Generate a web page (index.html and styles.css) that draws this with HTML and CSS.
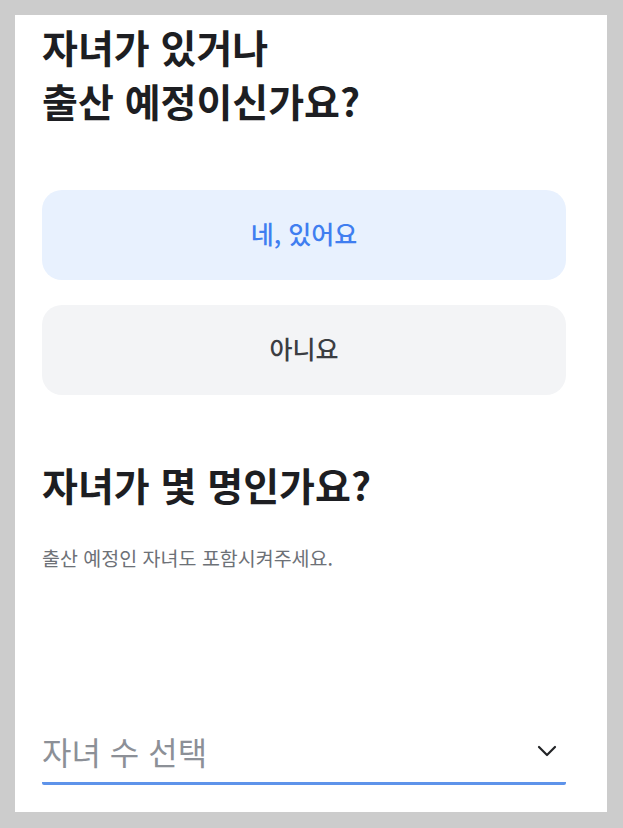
FILE: index.html
```html
<!DOCTYPE html>
<html lang="ko">
<head>
<meta charset="utf-8">
<title>자녀 정보</title>
<link rel="stylesheet" href="styles.css">
</head>
<body>
  <main class="sheet">
    <h1 class="title">자녀가 있거나<br>출산 예정이신가요?</h1>

    <div class="choices">
      <button class="choice choice--active" type="button">네, 있어요</button>
      <button class="choice" type="button">아니요</button>
    </div>

    <h2 class="title title--second">자녀가 몇 명인가요?</h2>
    <p class="hint">출산 예정인 자녀도 포함시켜주세요.</p>

    <div class="select">
      <span class="select__placeholder">자녀 수 선택</span>
      <svg class="select__chevron" width="20" height="12" viewBox="0 0 20 12" aria-hidden="true">
        <polyline points="2,2 10,10 18,2" fill="none" stroke="#222326" stroke-width="2.2" stroke-linecap="round" stroke-linejoin="round"/>
      </svg>
    </div>
  </main>
</body>
</html>
```
FILE: styles.css
```css
html, body {
  margin: 0;
  padding: 0;
}

body {
  background: #cccccc;
  font-family: "Noto Sans CJK KR", "Noto Sans", sans-serif;
  padding: 15px 16px 16px 15px;
}

.sheet {
  background: #ffffff;
  width: 592px;
  height: 797px;
  box-sizing: border-box;
  padding: 4px 41px 0 27px;
  display: flex;
  flex-direction: column;
}

.title {
  margin: 0;
  font-size: 39px;
  line-height: 54px;
  font-weight: 700;
  color: #1d1e22;
}

.choices {
  margin-top: 63px;
  display: flex;
  flex-direction: column;
  gap: 25px;
}

.choice {
  height: 90px;
  border: none;
  border-radius: 20px;
  background: #f3f4f6;
  color: #3b3d42;
  font-family: inherit;
  font-size: 25px;
  font-weight: 500;
  padding: 0 0 4px;
  cursor: pointer;
}

.choice--active {
  background: #e8f1fe;
  color: #3f7ef0;
}

.title--second {
  margin-top: 62px;
}

.hint {
  margin: 34px 0 0;
  font-size: 19.5px;
  line-height: 26px;
  color: #6d7177;
}

.select {
  margin-top: 160px;
  display: flex;
  align-items: center;
  justify-content: space-between;
  padding-bottom: 11px;
  border-bottom: 3px solid #5e93ea;
  border-radius: 0 0 2px 2px;
}

.select__placeholder {
  font-size: 32px;
  line-height: 40px;
  color: #8c9097;
}

.select__chevron {
  margin-right: 9px;
}
```
